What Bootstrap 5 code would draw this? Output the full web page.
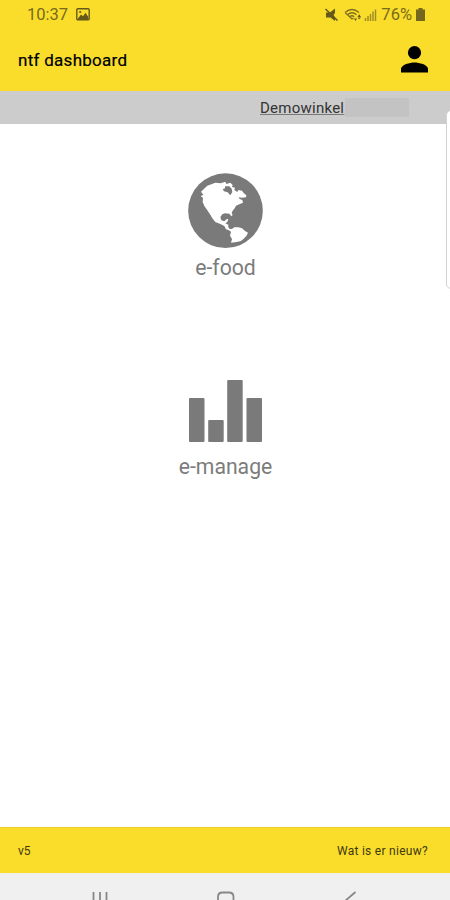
<!DOCTYPE html>
<html lang="nl">
<head>
<meta charset="utf-8">
<meta name="viewport" content="width=device-width, initial-scale=1">
<title>ntf dashboard</title>
<link href="https://cdn.jsdelivr.net/npm/bootstrap@5.3.0/dist/css/bootstrap.min.css" rel="stylesheet">
<style>
body{font-family:Roboto,"Liberation Sans",sans-serif;color:#000;height:900px;background:#fff}
.screen{width:450px;height:900px}
.yellow{background:#fadd2b}
.status{height:29px;color:#786a1c;padding-left:27px;padding-right:25px}
.clock{font-size:16.5px;line-height:28px}
.battery-text{font-size:16.5px;line-height:28px}
.titlebar{height:62px;padding:0 22px 2px 18px}
.title{font-size:17px;line-height:24px;padding-top:2px;font-weight:400;letter-spacing:.28px;-webkit-text-stroke:.2px #000}
.shop{height:33px;background:#ccc;padding-left:260px}
.shop-field{width:149px;height:19px;background:#c3c3c3;margin-top:7px}
.shop-name{font-size:15px;line-height:20px;letter-spacing:.25px;color:#333;background:#ccc;width:85px;text-decoration:underline;text-decoration-thickness:1px;text-decoration-color:#777;text-underline-offset:1px}
.tile-label{font-size:21.2px;line-height:24px;color:#7c7c7c;padding-left:1px}
.tile-food{padding-top:49px;height:247px}
.manage-label{margin-top:13px}
.bottombar{height:46px;padding:1px 22px 0 18px;font-size:12px;color:#3f390f;border-top:1px solid #efd02a}
.news{letter-spacing:.28px}
.sysnav{height:27px;background:#f0f0f0}
.edge-panel{right:-6px;top:110px;width:10px;height:179px;border:1px solid #d2d2d2;border-radius:6px;background:#fff}
svg{display:block}
</style>
<script src="https://cdn.jsdelivr.net/npm/bootstrap@5.3.0/dist/js/bootstrap.bundle.min.js"></script>
</head>
<body class="m-0 overflow-hidden">
<div class="screen d-flex flex-column position-relative overflow-hidden">
  <header class="yellow">
    <div class="status d-flex align-items-center">
      <span class="clock">10:37</span>
      <svg class="ms-2" width="14" height="13" viewBox="0 0 14 13"><rect x=".8" y=".8" width="12.4" height="11" rx="1" fill="none" stroke="#65591a" stroke-width="1.4"/><path d="M2 10.5 5 6.5 7 8.3 9.5 4.8 12.3 9v2H2z" fill="#65591a"/><circle cx="4.2" cy="4" r="1.1" fill="#65591a"/></svg>
      <svg class="ms-auto" width="56" height="16" viewBox="0 0 56 16">
        <path d="M1 5.500h4l5-4V6L8.500 8l1.500 2.500V14L5.500 10.500H1z" fill="#65591a"/>
        <path d="M.5 2 12.500 13.500" stroke="#65591a" stroke-width="1.500"/>
        <g fill="none" stroke="#80711f" stroke-width="1.300"><path d="M20 5.500Q27-.5 34 5.500M22.500 7.800Q27 3.800 31.500 7.800M24.800 9.800Q27 7.800 29.200 9.800M20 5.500 27 12 28.500 11"/></g>
        <path d="m29 11.500 1.500 2.500 1.500-2.500zm3.500-1.500 1.700-2.700L36 10zm0 .5H36l-1.800 1.800z" fill="#65591a"/>
        <path d="M40.500 11v3M43 9v5M45.500 7v7M48 4.500V14M50.500 2.500V14" stroke="#a08e25" stroke-width="1.500"/>
      </svg>
      <span class="battery-text">76%</span>
      <svg class="ms-1" width="9" height="13" viewBox="0 0 9 13"><path d="M2.500 0h4v1.500H9V13H0V1.500h2.500z" fill="#75671b"/></svg>
    </div>
    <div class="titlebar d-flex align-items-center justify-content-between">
      <span class="title">ntf dashboard</span>
      <svg width="27" height="27" viewBox="0 0 27 27"><circle cx="13.500" cy="6.700" r="6.600"/><path d="M0 26.500v-3.400C0 18.700 9 16.600 13.500 16.600S27 18.700 27 23.100v3.400z"/></svg>
    </div>
  </header>
  <div class="shop"><div class="d-inline-flex shop-field"><span class="shop-name">Demowinkel</span></div></div>
  <main class="flex-grow-1 d-flex flex-column">
    <section class="tile-food d-flex flex-column align-items-center">
      <svg width="75" height="75" viewBox="39 24 225 225">
        <circle cx="151.500" cy="137" r="112" fill="#7a7a7a"/>
        <path fill="#fff" d="M78 80 97 62 121 53 137 55 151 50 154 57 166 53 173 60 171 66 180 68 178 75 187 81 190 75 201 77 206 84 214 91 213 97 200 98 191 97 194 102 202 105 204 113 193 118 183 122 179 130 173 137 170 144 173 150 169 154 163 146 150 145 142 148 136 156 139 166 148 169 154 163 160 162 157 171 151 175 160 179 160 187 165 193 172 191 178 187 190 187 201 190 209 197 219 203 214 213 206 221 198 228 185 231 168 233 171 222 165 212 168 200 160 195 153 193 148 183 136 177 121 171 112 160 106 149 97 136 88 123 83 111 84 98 77 94 85 89z"/>
        <path fill="#7a7a7a" d="M150 64 163 64 170 71 172 81 166 91 158 82 147 79 143 73 150 70z"/>
      </svg>
      <div class="tile-label mt-2">e-food</div>
    </section>
    <section class="d-flex flex-column align-items-center">
      <svg width="74" height="71" viewBox="0 0 74 71" fill="#7a7a7a"><rect x="1" y="27" width="15.500" height="44" rx="1"/><rect x="20.200" y="49" width="15.500" height="22" rx="1"/><rect x="39.200" y="9" width="15.500" height="62" rx="1"/><rect x="58.500" y="27" width="15.500" height="44" rx="1"/></svg>
      <div class="tile-label manage-label">e-manage</div>
    </section>
  </main>
  <footer class="bottombar yellow d-flex align-items-center justify-content-between"><span>v5</span><span class="news">Wat is er nieuw?</span></footer>
  <div class="sysnav">
    <svg width="450" height="27" viewBox="0 0 450 27" fill="none" stroke="#888" stroke-width="1.800"><path d="M93.500 19v8M100 19v8M106.500 19v8M218 28v-4q0-4.500 4.500-4.500h6.500q4.500 0 4.500 4.500v4M355.500 19 345 28"/></svg>
  </div>
  <div class="edge-panel position-absolute"></div>
</div>
</body>
</html>
